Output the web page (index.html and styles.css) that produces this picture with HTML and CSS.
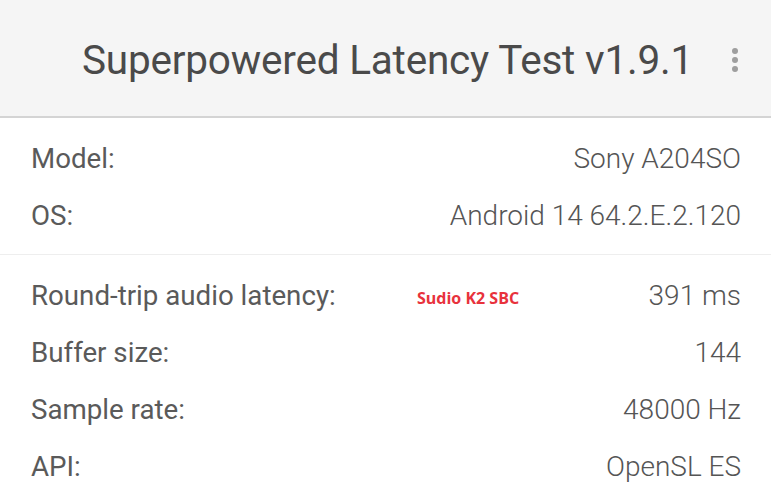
FILE: index.html
```html
<!DOCTYPE html>
<html>

<head>
    <meta charset='utf-8'>
    <title>Superpowered Latency Test</title>
    <meta name='viewport' content='width=device-width, initial-scale=1'>
    <link rel="stylesheet" href="styles.css">
</head>

<body>
    <header class="toolbar">
        <h1 class="toolbar-title">Superpowered Latency Test v1.9.1</h1>
        <svg class="toolbar-menu" width="8" height="26" viewBox="0 0 8 26">
            <circle cx="4" cy="4" r="3" />
            <circle cx="4" cy="13" r="3" />
            <circle cx="4" cy="22" r="3" />
        </svg>
    </header>
    <main>
        <section class="info">
            <div class="row"><span class="label">Model:</span><span class="value">Sony A204SO</span></div>
            <div class="row"><span class="label">OS:</span><span class="value">Android 14 64.2.E.2.120</span></div>
        </section>
        <section class="info">
            <div class="row">
                <span class="label">Round-trip audio latency:</span>
                <span class="note">Sudio K2 SBC</span>
                <span class="value">391 ms</span>
            </div>
            <div class="row"><span class="label">Buffer size:</span><span class="value">144</span></div>
            <div class="row"><span class="label">Sample rate:</span><span class="value">48000 Hz</span></div>
            <div class="row"><span class="label">API:</span><span class="value">OpenSL ES</span></div>
        </section>
    </main>
</body>

</html>
```

FILE: styles.css
```css
body,
html {
    margin: 0;
    padding: 0;
    background: #fff;
    font-family: Roboto, "Liberation Sans", sans-serif;
    color: #5a5a5a;
}

.toolbar {
    height: 118px;
    background: #f5f5f5;
    border-bottom: 2px solid #d4d4d4;
    display: flex;
    align-items: center;
    padding: 4px 32px 0 82px;
    box-sizing: border-box;
}

.toolbar-title {
    flex: 1;
    margin: 0;
    font-size: 40.5px;
    font-weight: 400;
    color: #4a4a4a;
    letter-spacing: -0.2px;
}

.toolbar-menu {
    fill: #9e9e9e;
}

.info {
    padding: 12px 30px 10px 31px;
    border-bottom: 1px solid #eeeeee;
}

.info:last-child {
    border-bottom: none;
}

.row {
    position: relative;
    height: 57px;
    display: flex;
    align-items: center;
    justify-content: space-between;
    font-size: 27.7px;
}

.label {
    font-weight: 400;
}

.value {
    font-weight: 300;
    font-size: 28px;
    color: #555;
}

.note {
    position: absolute;
    left: 386px;
    top: 20px;
    font-family: "Open Sans", sans-serif;
    font-weight: 700;
    font-size: 16px;
    color: #e8323c;
}
```
